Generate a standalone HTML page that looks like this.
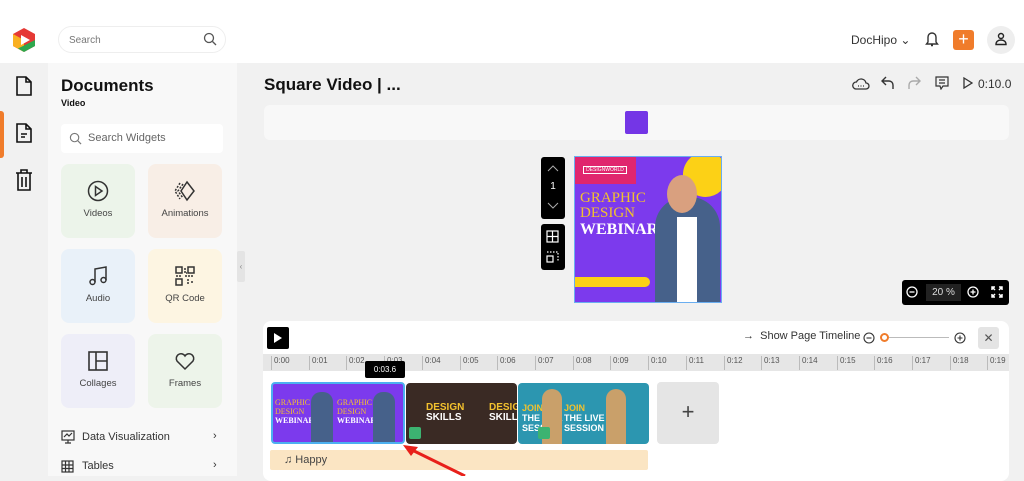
<!DOCTYPE html>
<html><head><meta charset="utf-8"><style>
*{box-sizing:border-box;margin:0;padding:0}
body{width:1024px;height:476px;overflow:hidden;font-family:"Liberation Sans",sans-serif;background:#f1f1f1;position:relative;color:#222}
.a{position:absolute}
.card{position:absolute;width:74px;height:74px;border-radius:8px;font-size:9.5px;color:#444;text-align:center}
.card svg{display:block;margin:16px auto 6px}
.tick{position:absolute;top:356px;font-size:8px;color:#555;border-left:1px solid #bbb;padding-left:2px;height:14px}
</style></head><body>
<div class="a" style="left:0;top:0;width:1024px;height:63px;background:#fff"></div>
<svg class="a" style="left:12px;top:27px" width="24" height="26" viewBox="0 0 24 26"><path d="M12 1L23 7V19L12 25L1 19V7Z" fill="#e53935"/><path d="M1 7V19L12 25L12 13Z" fill="#f9b021"/><path d="M23 13V19L12 25L6 21.5Z" fill="#2da84e"/><path d="M9 8L18 13L9 18Z" fill="#fff"/></svg>
<div class="a" style="left:58px;top:26px;width:168px;height:27px;border:1px solid #eee;border-radius:14px;font-size:10px;color:#777;padding:8px 10px">Search</div>
<svg class="a" style="left:203px;top:32px" width="14" height="14" viewBox="0 0 14 14" fill="none" stroke="#555" stroke-width="1.3"><circle cx="6" cy="6" r="4.5"/><path d="M9.5 9.5L13 13"/></svg>
<div class="a" style="left:851px;top:33px;font-size:12px;color:#333">DocHipo ⌄</div>
<svg class="a" style="left:925px;top:31px" width="14" height="16" viewBox="0 0 14 16" fill="none" stroke="#333" stroke-width="1.4"><path d="M3 11V6a4 4 0 0 1 8 0v5l1.5 2h-11z M6 14.5h2"/></svg>
<div class="a" style="left:953px;top:30px;width:21px;height:20px;background:#f07c2b;border-radius:3px;color:#fff;font-size:18px;line-height:19px;text-align:center">+</div>
<div class="a" style="left:987px;top:26px;width:28px;height:28px;background:#eee;border-radius:50%"></div>
<svg class="a" style="left:994px;top:32px" width="14" height="14" viewBox="0 0 14 14" fill="none" stroke="#222" stroke-width="1.4"><circle cx="7" cy="4" r="2.5"/><path d="M2 12.5c0-3 2-4.5 5-4.5s5 1.5 5 4.5z"/></svg>
<div class="a" style="left:48px;top:63px;width:189px;height:413px;background:#f8f8f8"></div>
<div class="a" style="left:0;top:111px;width:4px;height:47px;background:#f07c2b;border-radius:0 3px 3px 0"></div>
<svg class="a" style="left:14px;top:75px" width="20" height="22" viewBox="0 0 20 22" fill="none" stroke="#111" stroke-width="1.6"><path d="M3 2h9l5 5v13H3z M12 2v5h5"/></svg>
<svg class="a" style="left:14px;top:122px" width="20" height="22" viewBox="0 0 20 22" fill="none" stroke="#111" stroke-width="1.6"><path d="M3 2h9l5 5v13H3z M12 2v5h5 M7 12h6 M7 15h4"/></svg>
<svg class="a" style="left:14px;top:168px" width="20" height="24" viewBox="0 0 20 24" fill="none" stroke="#111" stroke-width="1.6"><path d="M2 5h16 M7 5V2h6v3 M4 5v17h12V5 M8 9v10 M12 9v10"/></svg>
<div class="a" style="left:61px;top:76px;font-size:17px;font-weight:bold;color:#111">Documents</div>
<div class="a" style="left:61px;top:98px;font-size:9px;font-weight:bold;color:#111">Video</div>
<div class="a" style="left:61px;top:124px;width:162px;height:29px;background:#fff;border-radius:4px;font-size:11px;color:#666;padding:8px 0 0 27px">Search Widgets</div>
<svg class="a" style="left:69px;top:132px" width="13" height="13" viewBox="0 0 14 14" fill="none" stroke="#777" stroke-width="1.2"><circle cx="6" cy="6" r="4.5"/><path d="M9.5 9.5L13 13"/></svg>
<div class="card" style="left:61px;top:164px;background:#ecf4ea"><svg width="22" height="22" viewBox="0 0 22 22" fill="none" stroke="#333" stroke-width="1.5"><circle cx="11" cy="11" r="9.5"/><path d="M8.5 6.5L15 11L8.5 15.5Z"/></svg>Videos</div>
<div class="card" style="left:148px;top:164px;background:#f8eee6"><svg width="22" height="22" viewBox="0 0 22 22" fill="none" stroke="#333" stroke-width="1.5"><path d="M13 2l7 9-7 9-6-9z"/><path d="M9 4l-5 7 5 7 M6 3l-5 8 5 8" stroke-dasharray="2 1.5"/></svg>Animations</div>
<div class="card" style="left:61px;top:249px;background:#e9f1f9"><svg width="22" height="22" viewBox="0 0 22 22" fill="none" stroke="#333" stroke-width="1.5"><path d="M8 17V4l11-2v13"/><circle cx="5.5" cy="17" r="2.5"/><circle cx="16.5" cy="15" r="2.5"/></svg>Audio</div>
<div class="card" style="left:148px;top:249px;background:#fdf5e2"><svg width="22" height="22" viewBox="0 0 22 22" fill="none" stroke="#333" stroke-width="1.5"><rect x="2" y="2" width="6" height="6"/><rect x="14" y="2" width="6" height="6"/><rect x="2" y="14" width="6" height="6"/><path d="M11 3v5h2 M11 11h9 M14 14v6 M17 17h3 M2 11h6" stroke-dasharray="2 1"/></svg>QR Code</div>
<div class="card" style="left:61px;top:334px;background:#eeeef8"><svg width="22" height="22" viewBox="0 0 22 22" fill="none" stroke="#333" stroke-width="1.6"><rect x="2" y="2" width="18" height="18"/><path d="M9 2v18 M9 11h11"/></svg>Collages</div>
<div class="card" style="left:148px;top:334px;background:#edf4ea"><svg width="22" height="22" viewBox="0 0 22 22" fill="none" stroke="#333" stroke-width="1.5"><path d="M11 19L3 11a4.5 4.5 0 0 1 8-5 4.5 4.5 0 0 1 8 5z"/></svg>Frames</div>
<svg class="a" style="left:61px;top:430px" width="14" height="14" viewBox="0 0 14 14" fill="none" stroke="#333" stroke-width="1.2"><rect x="1" y="1" width="12" height="9"/><path d="M3 7l3-3 2 2 3-3 M7 10v3 M4 13h6"/></svg>
<div class="a" style="left:82px;top:431px;font-size:11px;color:#333">Data Visualization</div>
<div class="a" style="left:213px;top:430px;font-size:11px;color:#333">›</div>
<svg class="a" style="left:61px;top:460px" width="13" height="13" viewBox="0 0 13 13" fill="none" stroke="#333" stroke-width="1.2"><rect x="1" y="1" width="11" height="11"/><path d="M1 5h11 M1 8.5h11 M4.5 1v11 M8 1v11"/></svg>
<div class="a" style="left:82px;top:460px;font-size:11px;color:#333">Tables</div>
<div class="a" style="left:213px;top:459px;font-size:11px;color:#333">›</div>
<div class="a" style="left:237px;top:251px;width:8px;height:31px;background:#e4e4e4;border-radius:2px;font-size:8px;color:#888;text-align:center;line-height:31px">‹</div>
<div class="a" style="left:264px;top:75px;font-size:17px;font-weight:bold;color:#111">Square Video | ...</div>
<svg class="a" style="left:852px;top:77px" width="18" height="13" viewBox="0 0 18 13" fill="none" stroke="#333" stroke-width="1.3"><path d="M4 12h10a3 3 0 0 0 0-6 5 5 0 0 0-9.5-1A3.5 3.5 0 0 0 4 12z M6 9h1 M8.5 9h1 M11 9h1"/></svg>
<svg class="a" style="left:881px;top:76px" width="14" height="14" viewBox="0 0 14 14" fill="none" stroke="#333" stroke-width="1.4"><path d="M5 1L1 5l4 4 M1 5h7a4 4 0 0 1 4 4v4"/></svg>
<svg class="a" style="left:907px;top:76px" width="14" height="14" viewBox="0 0 14 14" fill="none" stroke="#aaa" stroke-width="1.4"><path d="M9 1l4 4-4 4 M13 5H6a4 4 0 0 0-4 4v4"/></svg>
<svg class="a" style="left:935px;top:76px" width="14" height="14" viewBox="0 0 14 14" fill="none" stroke="#333" stroke-width="1.2"><path d="M1 1h12v9H8l-2 3-1-3H1z M4 4h6 M4 7h6"/></svg>
<svg class="a" style="left:963px;top:77px" width="10" height="12" viewBox="0 0 10 12" fill="none" stroke="#333" stroke-width="1.3"><path d="M1 1l8 5-8 5z"/></svg>
<div class="a" style="left:978px;top:77px;font-size:12px;color:#333">0:10.0</div>
<div class="a" style="left:264px;top:105px;width:745px;height:35px;background:#f8f8f8;border-radius:6px"></div>
<div class="a" style="left:625px;top:111px;width:23px;height:23px;background:#7436e6;border-radius:2px"></div>
<div class="a" style="left:541px;top:157px;width:24px;height:62px;background:#000;border-radius:3px;color:#fff;font-size:10px;text-align:center;padding-top:24px">1</div>
<svg class="a" style="left:546px;top:164px" width="14" height="50" viewBox="0 0 14 50" fill="none" stroke="#aaa" stroke-width="1"><path d="M2 7l5-5 5 5 M2 39l5 5 5-5"/></svg>
<div class="a" style="left:541px;top:224px;width:24px;height:46px;background:#000;border-radius:3px"></div>
<svg class="a" style="left:546px;top:230px" width="13" height="34" viewBox="0 0 13 34" fill="none" stroke="#fff" stroke-width="1.2"><rect x="1" y="1" width="11" height="11"/><path d="M6.5 1v11 M1 6.5h11"/><rect x="1" y="26" width="6" height="6"/><path d="M1 22h11v10" stroke-dasharray="1.5 1.5"/></svg>
<div class="a" style="left:574px;top:156px;width:148px;height:147px;background:#7c3aed;border:1px solid #6aaef0;overflow:hidden">
<div class="a" style="left:0;top:0;width:61px;height:27px;background:#e0266e"></div>
<div class="a" style="left:8px;top:9px;width:44px;height:8px;border:1px solid #fff;font-size:5px;color:#fff;text-align:center;line-height:6px">DESIGNWORLD</div>
<div class="a" style="left:108px;top:-5px;width:45px;height:45px;background:#fcd116;border-radius:50%"></div>
<div class="a" style="left:5px;top:34px;font-family:'Liberation Serif',serif;font-size:15px;line-height:15px;color:#f2c12e">GRAPHIC<br>DESIGN</div>
<div class="a" style="left:5px;top:64px;font-family:'Liberation Serif',serif;font-size:16px;font-weight:bold;color:#fff">WEBINAR</div>
<div class="a" style="left:80px;top:40px;width:65px;height:107px;background:#46618a;border-radius:30px 30px 0 0"></div>
<div class="a" style="left:102px;top:60px;width:20px;height:87px;background:#fff"></div>
<div class="a" style="left:92px;top:18px;width:30px;height:38px;background:#d9a07f;border-radius:50%"></div>
<div class="a" style="left:0;top:120px;width:75px;height:10px;background:#fcd116;border-radius:0 5px 5px 0"></div>
</div>
<div class="a" style="left:902px;top:280px;width:107px;height:25px;background:#000;border-radius:3px"></div>
<div class="a" style="left:926px;top:284px;width:35px;height:17px;background:#222;color:#ddd;font-size:10px;text-align:center;line-height:17px">20 %</div>
<svg class="a" style="left:906px;top:286px" width="12" height="12" viewBox="0 0 12 12" fill="none" stroke="#fff" stroke-width="1.3"><circle cx="6" cy="6" r="5"/><path d="M3.5 6h5"/></svg>
<svg class="a" style="left:967px;top:286px" width="12" height="12" viewBox="0 0 12 12" fill="none" stroke="#fff" stroke-width="1.3"><circle cx="6" cy="6" r="5"/><path d="M3.5 6h5 M6 3.5v5"/></svg>
<svg class="a" style="left:991px;top:286px" width="12" height="12" viewBox="0 0 12 12" fill="none" stroke="#fff" stroke-width="1.5"><path d="M1 4V1h3 M8 1h3v3 M11 8v3H8 M4 11H1V8 M1 1l3 3 M11 1L8 4 M11 11L8 8 M1 11l3-3"/></svg>
<div class="a" style="left:263px;top:321px;width:746px;height:160px;background:#fff;border-radius:8px"></div>
<div class="a" style="left:267px;top:327px;width:22px;height:22px;background:#000;border-radius:2px"></div>
<svg class="a" style="left:273px;top:332px" width="10" height="12"><path d="M1 1l8 5-8 5z" fill="#fff"/></svg>
<div class="a" style="left:743px;top:330px;font-size:11px;color:#333">→&nbsp; Show Page Timeline</div>
<svg class="a" style="left:863px;top:332px" width="12" height="12" viewBox="0 0 12 12" fill="none" stroke="#333" stroke-width="1.1"><circle cx="6" cy="6" r="5"/><path d="M3.5 6h5"/></svg>
<div class="a" style="left:880px;top:333px;width:9px;height:9px;border:2px solid #f07c2b;border-radius:50%"></div>
<div class="a" style="left:889px;top:337px;width:60px;height:1px;background:#bbb"></div>
<svg class="a" style="left:954px;top:332px" width="12" height="12" viewBox="0 0 12 12" fill="none" stroke="#333" stroke-width="1.1"><circle cx="6" cy="6" r="5"/><path d="M3.5 6h5 M6 3.5v5"/></svg>
<div class="a" style="left:978px;top:327px;width:21px;height:22px;background:#e4e4e4;border-radius:3px;text-align:center;line-height:22px;color:#555;font-size:12px">✕</div>
<div class="a" style="left:263px;top:354px;width:746px;height:17px;background:#e6e6e6"></div>
<div class="tick" style="left:271px">0:00</div><div class="tick" style="left:309px">0:01</div><div class="tick" style="left:346px">0:02</div><div class="tick" style="left:384px">0:03</div><div class="tick" style="left:422px">0:04</div><div class="tick" style="left:460px">0:05</div><div class="tick" style="left:497px">0:06</div><div class="tick" style="left:535px">0:07</div><div class="tick" style="left:573px">0:08</div><div class="tick" style="left:610px">0:09</div><div class="tick" style="left:648px">0:10</div><div class="tick" style="left:686px">0:11</div><div class="tick" style="left:724px">0:12</div><div class="tick" style="left:761px">0:13</div><div class="tick" style="left:799px">0:14</div><div class="tick" style="left:837px">0:15</div><div class="tick" style="left:874px">0:16</div><div class="tick" style="left:912px">0:17</div><div class="tick" style="left:950px">0:18</div><div class="tick" style="left:987px">0:19</div>
<div class="a" style="left:365px;top:361px;width:40px;height:17px;background:#000;color:#fff;font-size:8px;text-align:center;line-height:17px;border-radius:2px">0:03.6</div>
<div class="a" style="left:271px;top:382px;width:134px;height:62px;background:#7c3aed;border:2px solid #4cb0f0;border-radius:4px;overflow:hidden">
<div class="a" style="left:2px;top:14px;font-size:8px;line-height:9px;color:#f2c12e;font-family:'Liberation Serif',serif">GRAPHIC<br>DESIGN<br><b style="color:#fff">WEBINAR</b></div>
<div class="a" style="left:64px;top:14px;font-size:8px;line-height:9px;color:#f2c12e;font-family:'Liberation Serif',serif">GRAPHIC<br>DESIGN<br><b style="color:#fff">WEBINAR</b></div>
<div class="a" style="left:38px;top:8px;width:22px;height:54px;background:#46618a;border-radius:10px 10px 0 0"></div>
<div class="a" style="left:100px;top:8px;width:22px;height:54px;background:#46618a;border-radius:10px 10px 0 0"></div>
</div>
<div class="a" style="left:406px;top:383px;width:111px;height:61px;background:#3a2a24;border-radius:4px;overflow:hidden"><div class="a" style="left:20px;top:20px;font-size:10px;line-height:10px;font-weight:bold;color:#f2c12e">DESIGN<br><span style="color:#fff">SKILLS</span></div><div class="a" style="left:83px;top:20px;font-size:10px;line-height:10px;font-weight:bold;color:#f2c12e">DESIGN<br><span style="color:#fff">SKILLS</span></div><div class="a" style="left:3px;top:44px;width:12px;height:12px;background:#3cb371;border-radius:2px"></div></div>
<div class="a" style="left:518px;top:383px;width:131px;height:61px;background:#2c96b0;border-radius:4px;overflow:hidden"><div class="a" style="left:4px;top:20px;font-size:9px;line-height:10px;font-weight:bold;color:#f2c12e">JOIN<br><span style="color:#fff">THE LIVE<br>SESSION</span></div><div class="a" style="left:46px;top:20px;font-size:9px;line-height:10px;font-weight:bold;color:#f2c12e">JOIN<br><span style="color:#fff">THE LIVE<br>SESSION</span></div><div class="a" style="left:24px;top:6px;width:20px;height:55px;background:#c9a06a;border-radius:10px 10px 0 0"></div><div class="a" style="left:88px;top:6px;width:20px;height:55px;background:#c9a06a;border-radius:10px 10px 0 0"></div><div class="a" style="left:20px;top:44px;width:12px;height:12px;background:#3cb371;border-radius:2px"></div></div>
<div class="a" style="left:657px;top:382px;width:62px;height:62px;background:#e5e5e5;border-radius:4px;text-align:center;line-height:60px;font-size:22px;color:#444">+</div>
<div class="a" style="left:270px;top:450px;width:378px;height:20px;background:#fbe5c3;border-radius:2px;font-size:11px;color:#444;padding:4px 0 0 14px">♫ Happy</div>
<svg class="a" style="left:398px;top:436px" width="80" height="40"><path d="M67 40L10 12" stroke="#e8201a" stroke-width="3"/><path d="M5 9L20 11L13 20Z" fill="#e8201a"/></svg>
</body></html>
